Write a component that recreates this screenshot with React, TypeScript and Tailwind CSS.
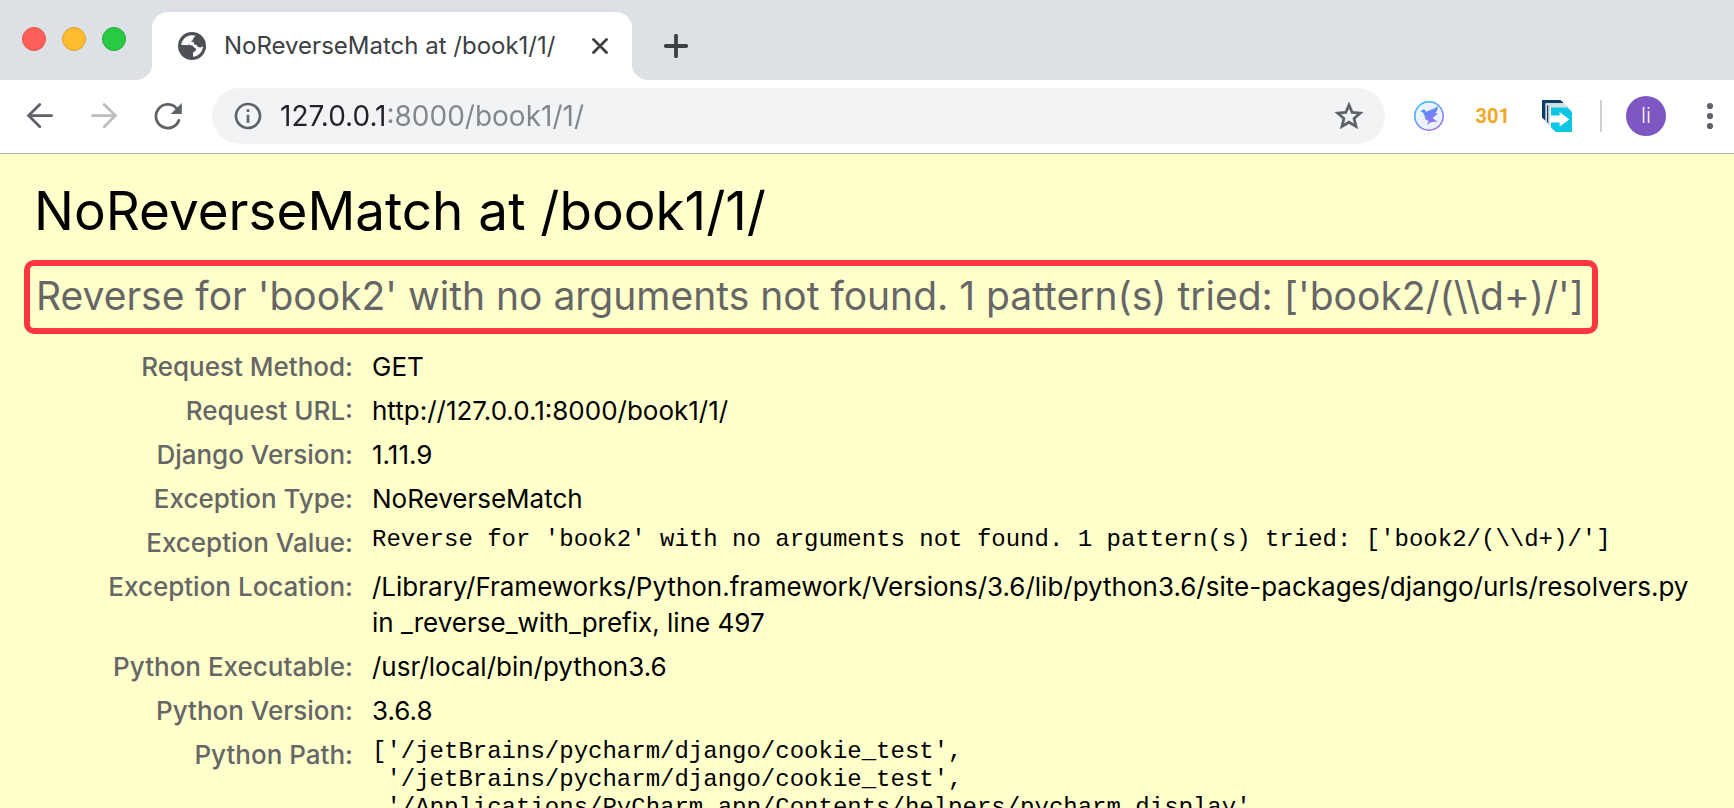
import React from 'react';
import { MdInfoOutline } from 'react-icons/md';

type Row = { label: string; value: string; mono?: boolean };

const message = "Reverse for 'book2' with no arguments not found. 1 pattern(s) tried: ['book2/(\\\\d+)/']";

const rows: Row[] = [
  { label: 'Request Method:', value: 'GET' },
  { label: 'Request URL:', value: 'http://127.0.0.1:8000/book1/1/' },
  { label: 'Django Version:', value: '1.11.9' },
  { label: 'Exception Type:', value: 'NoReverseMatch' },
  { label: 'Exception Value:', value: message, mono: true },
  {
    label: 'Exception Location:',
    value:
      '/Library/Frameworks/Python.framework/Versions/3.6/lib/python3.6/site-packages/django/urls/resolvers.py in _reverse_with_prefix, line 497',
  },
  { label: 'Python Executable:', value: '/usr/local/bin/python3.6' },
  { label: 'Python Version:', value: '3.6.8' },
  {
    label: 'Python Path:',
    value:
      "['/jetBrains/pycharm/django/cookie_test',\n '/jetBrains/pycharm/django/cookie_test',\n '/Applications/PyCharm.app/Contents/helpers/pycharm_display',",
    mono: true,
  },
];

function GlobeIcon() {
  return (
    <svg className="size-7 shrink-0" viewBox="0 0 28 28" aria-hidden="true">
      <circle cx="14" cy="14" r="14" fill="#4d5156" />
      <path
        fill="#fff"
        d="M3.2 12.8C3.8 7.6 8 3.6 13.4 3.2L17.4 3.6C17.6 5 15.2 5.2 15 7.2C15 9 13 8.6 12.8 9.8C12.8 11 10.4 10.8 10.4 12.4C12 13.2 14.6 12.6 15.4 14.4C15.6 16 17.8 15 18 17.4C17.8 19.6 15.2 19.4 15 21.4L15 24.8C20.4 24.4 24.8 20 24.9 14.2L22.4 15.4C20.4 15.4 19.2 14.6 18.6 13C16.4 13 15.8 12 16 10.2L13 9.8L9.6 13.6Z"
      />
      <path fill="#4d5156" d="M3 13.2H9.4C11.2 13.4 11.6 15 11.4 16.2C13.6 16 15.6 16.6 15.4 18.2C15.2 19.8 12.4 19.6 12.2 21.4L11.6 25L5 22Z" />
    </svg>
  );
}

function BirdIcon() {
  return (
    <svg className="size-[30px]" viewBox="0 0 30 30" aria-hidden="true">
      <defs>
        <linearGradient id="bird-ring" x1="0" y1="0" x2="0.6" y2="1">
          <stop offset="0" stopColor="#1fc8f5" />
          <stop offset="1" stopColor="#9a6bf5" />
        </linearGradient>
        <linearGradient id="bird-body" x1="0" y1="0" x2="0.5" y2="1">
          <stop offset="0" stopColor="#37a0f7" />
          <stop offset="1" stopColor="#9a6bf5" />
        </linearGradient>
      </defs>
      <circle cx="15" cy="15" r="14.2" fill="#e9f2fd" stroke="url(#bird-ring)" strokeWidth="1.5" />
      <path
        fill="url(#bird-body)"
        d="M6.6 10.2L9 8.6C10.6 8.4 11.6 9.4 12.4 11C15 8.8 20 8.6 23.8 5C24 8.6 22.8 10.8 20.8 12.2C21.8 12.4 22.8 12.2 23.6 11.8C22.6 14.4 20.6 15.8 18.6 16.6C19.6 18 21.4 19.6 24 20.6C21.4 21 18.4 20.8 16.4 21.4C15 22 14.2 23 13.6 24.4C13.4 22.4 14 21 14.8 19.8C12.6 19.6 11 18.4 10.8 16C10.6 13.4 9.4 11.2 6.6 10.2Z"
      />
    </svg>
  );
}

function CopyArrowIcon() {
  return (
    <svg className="h-8 w-[30px]" viewBox="0 0 30 32" aria-hidden="true">
      <path fill="#0b3d66" d="M0 0H18.4L22 3.2H3.6V21L0 17.6Z" />
      <path fill="#d3dee5" d="M3.6 3.2H22L27 7.6H8V26.6L3.6 22Z" />
      <path fill="#0b3d66" d="M5 5.4H6.2V23.2L5 22Z" />
      <path fill="#0cc6e4" d="M9 7.6H25.6L30 12V32H13.8L9 27.4Z" />
      <path fill="#fff" d="M8 15.6H17.6V12L27.4 19.4L17.6 26.4V22.6H8Z" />
    </svg>
  );
}

function TabStrip() {
  return (
    <div className="flex h-20 bg-white">
      <div className="flex w-[152px] shrink-0 items-center gap-4 rounded-br-2xl bg-[#dde0e5] pb-0.5 pl-[22px]">
        <button type="button" aria-label="Close window" className="size-6 rounded-full border border-[#e5534d] bg-[#fe5f58]" />
        <button type="button" aria-label="Minimise window" className="size-6 rounded-full border border-[#e0a030] bg-[#febc2e]" />
        <button type="button" aria-label="Zoom window" className="size-6 rounded-full border border-[#22ac38] bg-[#28ca42]" />
      </div>
      <div className="flex w-[480px] min-w-0 flex-col bg-[#dde0e5] pt-3">
        <div className="flex flex-1 items-center rounded-t-2xl bg-white pr-6 pl-[26px]">
          <GlobeIcon />
          <span className="ml-[18px] flex-1 truncate text-[24px] leading-8 text-[#3c4043]">NoReverseMatch at /book1/1/</span>
          <button type="button" aria-label="Close tab" className="shrink-0">
            <svg className="size-4" viewBox="0 0 16 16" aria-hidden="true">
              <path d="M1.5 1.5L14.5 14.5M14.5 1.5L1.5 14.5" stroke="#3c4043" strokeWidth="2.8" strokeLinecap="round" />
            </svg>
          </button>
        </div>
      </div>
      <div className="flex flex-1 items-center rounded-bl-2xl bg-[#dde0e5] pt-3 pl-8">
        <button type="button" aria-label="New tab">
          <svg className="size-6" viewBox="0 0 24 24" aria-hidden="true">
            <path d="M12 1.8V22.2M1.8 12H22.2" stroke="#3c4043" strokeWidth="3.8" strokeLinecap="round" />
          </svg>
        </button>
      </div>
    </div>
  );
}

function Toolbar() {
  return (
    <div className="flex items-center border-b border-[#b4b6b8] bg-white pt-2 pr-5 pb-[9px] pl-[26px]">
      <div className="flex items-center gap-9">
        <button type="button" aria-label="Back">
          <svg className="size-7" viewBox="0 0 28 28" fill="none" stroke="#5f6368" strokeWidth="2.8" strokeLinecap="round" aria-hidden="true">
            <path d="M25.6 13.6H2.8M13.8 2.4L2.6 13.6L13.8 24.8" />
          </svg>
        </button>
        <button type="button" aria-label="Forward">
          <svg className="size-7" viewBox="0 0 28 28" fill="none" stroke="#bbbdbf" strokeWidth="2.8" strokeLinecap="round" aria-hidden="true">
            <path d="M2.4 13.6H25.2M14.2 2.4L25.4 13.6L14.2 24.8" />
          </svg>
        </button>
        <button type="button" aria-label="Reload">
          <svg className="size-7" viewBox="0 0 28 28" aria-hidden="true">
            <path d="M22.4 6.2A11.8 11.8 0 1 0 24.8 18.4" fill="none" stroke="#5f6368" strokeWidth="2.8" strokeLinecap="round" />
            <path d="M27.8 1V12H16.8Z" fill="#5f6368" />
          </svg>
        </button>
      </div>
      <div className="ml-[30px] flex h-14 flex-1 items-center rounded-full bg-[#f1f3f4] pr-[21px] pl-5 text-[#5f6368]">
        <MdInfoOutline className="size-8 shrink-0" aria-hidden="true" />
        <input
          type="text"
          aria-label="Address"
          defaultValue="127.0.0.1:8000/book1/1/"
          className="ml-4 h-10 min-w-0 flex-1 bg-[linear-gradient(to_right,#202124_108px,#80868b_108px)] bg-clip-text text-[28px] leading-10 text-transparent outline-none"
        />
        <button type="button" aria-label="Bookmark this page">
          <svg className="size-[30px]" viewBox="0 0 30 30" fill="none" stroke="#5f6368" strokeWidth="2.8" aria-hidden="true">
            <path d="M15 4L18.2 11.5L26.2 12.2L20.1 17.5L22 25.4L15 21.2L8 25.4L9.9 17.5L3.8 12.2L11.8 11.5Z" />
          </svg>
        </button>
      </div>
      <div className="ml-[29px] flex items-center gap-8">
        <button type="button" aria-label="Bird extension">
          <BirdIcon />
        </button>
        <button type="button" className="font-[Roboto] text-[20px] leading-6 font-bold text-[#f5a623]">
          301
        </button>
        <button type="button" aria-label="Copy extension">
          <CopyArrowIcon />
        </button>
      </div>
      <div className="ml-7 h-8 w-0.5 bg-[#cfcfcf]" />
      <button type="button" className="ml-6 size-10 rounded-full bg-[#7e57c2] font-[Roboto] text-[22px] leading-10 font-light text-white">
        li
      </button>
      <button type="button" aria-label="Menu" className="ml-10">
        <svg className="h-7 w-2" viewBox="0 0 8 28" fill="#5f6368" aria-hidden="true">
          <circle cx="4" cy="4" r="3.1" />
          <circle cx="4" cy="14" r="3.1" />
          <circle cx="4" cy="24" r="3.1" />
        </svg>
      </button>
    </div>
  );
}

export default function App() {
  return (
    <div className="flex h-screen flex-col overflow-hidden bg-[#ffffcc] font-[Inter,'Liberation_Sans',sans-serif] text-black">
      <header className="shrink-0">
        <TabStrip />
        <Toolbar />
      </header>
      <main className="min-h-0 flex-1 overflow-hidden pt-6">
        <h1 className="pl-[34px] text-[53px] leading-[66px]">NoReverseMatch at /book1/1/</h1>
        <div className="mt-4 ml-6 w-fit rounded-[10px] border-6 border-[#ff3640] pr-2 pb-0.5 pl-1.5">
          <p className="text-[39px] leading-[60px] text-[#666666]">{message}</p>
        </div>
        <table className="mt-[11px] w-full text-left text-[26px] leading-9">
          <tbody>
            {rows.map((row) => (
              <tr key={row.label} className="align-top">
                <th scope="row" className="w-[372px] py-1 pr-[19px] text-right font-medium text-[#666666]">
                  {row.label}
                </th>
                <td className={row.mono ? 'pt-[5px] pr-8' : 'py-1 pr-8'}>
                  {row.mono ? (
                    <pre className="font-['Liberation_Mono',monospace] text-[24px] leading-7">{row.value}</pre>
                  ) : (
                    row.value
                  )}
                </td>
              </tr>
            ))}
          </tbody>
        </table>
      </main>
    </div>
  );
}
